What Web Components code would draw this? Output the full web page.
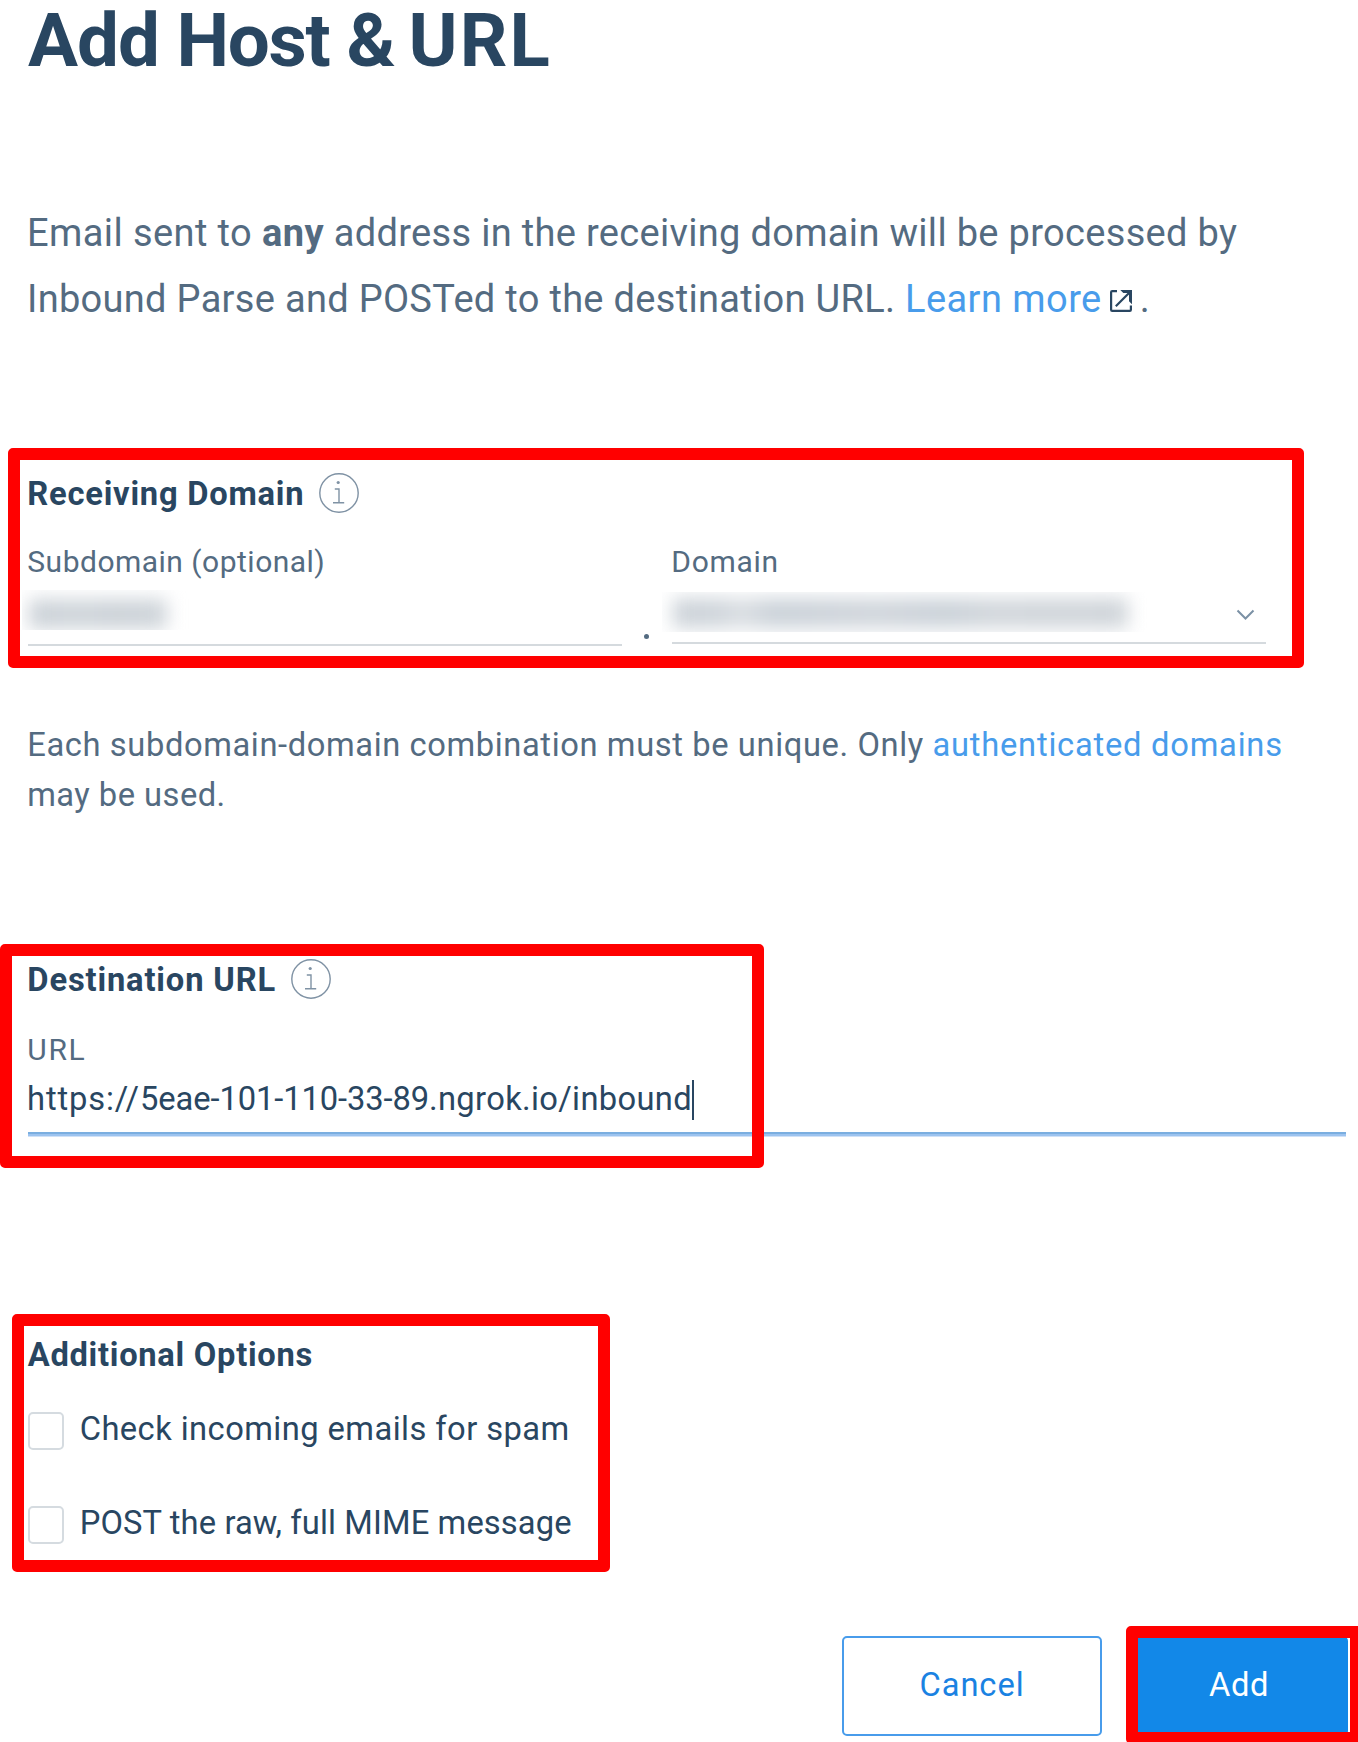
<!DOCTYPE html>
<html lang="en">
<head>
<meta charset="utf-8">
<title>Add Host &amp; URL</title>
<style>
html,body{margin:0;padding:0;background:#fff;overflow:hidden}
body{width:1358px;height:1742px;font-family:Roboto,"Liberation Sans",sans-serif;color:#294661}
</style>
</head>
<body>
<inbound-page></inbound-page>
<script>
const define = (name, html, init) => customElements.define(name, class extends HTMLElement {
  connectedCallback() {
    if (this.shadowRoot) return;
    const t = document.createElement('template');
    t.innerHTML = html;
    this.attachShadow({mode: 'open'}).append(t.content.cloneNode(true));
    if (init) init.call(this);
  }
});

/* A run of text whose tracking is adjusted so that it fills the width in "w". */
define('text-run', `<style>
:host{display:inline-block;white-space:pre;flex:none}
:host([link]){color:#489ceb}
:host([strong]){font-weight:700}
</style><slot></slot>`, function () {
  const w = parseFloat(this.getAttribute('w'));
  const n = this.textContent.length;
  if (w && n) {
    this.style.letterSpacing = (w - this.getBoundingClientRect().width) / n + 'px';
    this.style.width = w + 'px';
  }
});

define('info-icon', `<style>:host{display:block;width:40px;height:40px;flex:none}svg{display:block}</style>
<svg width="40" height="40" viewBox="0 0 40 40" fill="none" stroke="#7f92a4" stroke-width="1.4">
<circle cx="20" cy="20" r="19.2"/><path d="M15.8 16H20V29.7M14 29.7H25.2"/><circle cx="19.2" cy="9.5" r="1.6" fill="#7f92a4" stroke="none"/></svg>`);

define('external-icon', `<style>:host{display:block;width:22px;height:22px;flex:none}svg{display:block}</style>
<svg width="22" height="22" viewBox="0 0 22 22" fill="none" stroke="#294661" stroke-width="2.2">
<path d="M7 1.1H2.2Q1.1 1.1 1.1 2.2V19.8Q1.1 20.9 2.2 20.9H19.8Q20.9 20.9 20.9 19.8V15.5M5.8 16.2 20 2"/>
<path d="M10.3 0H22V14.2L19 11.2V4.4L17.6 3H13.3Z" fill="#294661" stroke="none"/></svg>`);

define('section-heading', `<style>
:host{display:flex;height:40px;margin-left:-.7px;font-size:32.7px;line-height:40px;font-weight:700;color:#294661}
.t{padding-top:1px;height:39px}
</style><div class="t"><slot></slot></div><slot name="icon"></slot>`);

define('form-field', `<style>
:host{display:flex;flex-direction:column;color:#546b81}
.l{height:40px;font-size:30px;line-height:40px;margin-left:-.7px}
</style><div class="l"><slot name="label"></slot></div><slot></slot>`);

/* Input whose value is obscured. */
define('masked-value', `<style>
:host{display:flex;justify-content:space-between;box-sizing:border-box;border-bottom:2px solid #d5dade}
.m{height:40px;width:var(--mw);margin-left:var(--ml);overflow:hidden;box-sizing:border-box;padding:var(--mp)}
.b{height:30px;filter:blur(9px);background:var(--ink)}
svg{display:block;margin:17px 11px 0 0}
:host(:not([select])) svg{display:none}
</style><div class="m"><div class="b"></div></div>
<svg width="19" height="12" viewBox="0 0 19 12" fill="none" stroke="#7b91a5" stroke-width="2"><path d="M1.5 1.5 9.5 9.5 17.5 1.5"/></svg>`);

define('url-input', `<style>
:host{display:flex;height:52px;font-size:32.7px;line-height:38px;color:#294661;margin-top:10px;
background:linear-gradient(#7aaee0 0 2px,#9cc3ef 2px 4px,#cfe1f7 4px 5px) 0 52px/100% 5px no-repeat;padding-bottom:5px}
.v{display:flex;margin-left:-1px}.c{width:2px;height:40px;background:#294661}
</style><div class="v"><slot></slot></div><div class="c"></div>`);

define('check-option', `<style>
:host{display:flex;height:38px;color:#294661;font-size:32.7px;line-height:36px}
.b{box-sizing:border-box;width:36px;height:38px;border:2px solid #d5dbe0;border-radius:5px;margin-right:15.7px}
.t{margin-top:-1px}
</style><div class="b"></div><div class="t"><slot></slot></div>`);

define('push-button', `<style>
:host{display:flex;justify-content:center;box-sizing:border-box;height:100px;width:260px;border:2px solid #489ceb;border-radius:5px;color:#1a82e2;font-size:32.7px;line-height:94px}
:host([primary]){width:218px;background:#1288e8;border-color:#1288e8;color:#fff}
</style><slot></slot>`);

/* Red outline laid over the form. */
define('call-out', `<style>:host{position:absolute;box-sizing:border-box;border:12px solid #f00;border-radius:5px}</style>`);

define('inbound-page', `<style>
:host{display:block;position:relative;width:1358px;height:1742px}
main{display:flex;flex-direction:column;padding-left:28px}
h1{display:flex;margin:0;height:80px;font-size:74.5px;line-height:81px;font-weight:700}
.intro{margin:120px 0 0 -1px;font-size:38px;line-height:66px;color:#546b81}
.line{display:flex}
.intro external-icon{margin:24px 8px 0 8px}
.r1{margin-top:141px}
.fields{display:flex;margin-top:29px;height:104px}
.fields form-field{width:594px}
.dot{width:50px;flex:none;padding:92px 0 0 21.5px;box-sizing:border-box}
.dot i{display:block;width:5px;height:5px;border-radius:3px;background:#546b81}
.help{margin:74px 0 0 -.8px;font-size:32.7px;line-height:50px;color:#546b81}
.r2{margin-top:139px}
.url{margin-top:31px;width:1318px}
.r3{margin:197px 0 0 -.3px}
.options{display:flex;flex-direction:column;gap:56px;margin-top:38px}
.actions{display:flex;gap:28px;margin:92px 0 0 814px}
</style>
<main>
<h1><text-run w="148.5">Add </text-run><text-run w="170">Host </text-run><text-run w="62">&amp; </text-run><text-run w="143.5">URL</text-run></h1>
<div class="intro">
<div class="line"><text-run w="235">Email sent to </text-run><text-run strong w="62">any</text-run><text-run w="913.3"> address in the receiving domain will be processed by</text-run></div>
<div class="line"><text-run w="878">Inbound Parse and POSTed to the destination URL. </text-run><text-run link w="196.7">Learn more</text-run><external-icon></external-icon><text-run>.</text-run></div>
</div>
<section-heading class="r1"><text-run w="277">Receiving Domain</text-run><info-icon slot="icon" style="margin-left:14.7px"></info-icon></section-heading>
<div class="fields">
<form-field><text-run slot="label" w="298">Subdomain (optional)</text-run>
<masked-value style="margin-top:8px;height:56px;--mw:170px;--ml:-6px;--mp:9px 0 0 7px;--ink:linear-gradient(90deg,#ccd2d8,#d0d6db 40%,#ccd2d8 60%,#cfd5da) 0 0/138px 100% no-repeat"></masked-value></form-field>
<div class="dot"><i></i></div>
<form-field><text-run slot="label" w="107.5">Domain</text-run>
<masked-value select style="margin-top:10px;height:52px;--mw:485px;--ml:-10px;--mp:6px 0 0 11px;--ink:linear-gradient(90deg,#cdd3d9,#cfd5db 10%,#dbdfe3 15%,#cbd2d9 22%,#d1d6dc 45%,#cbd2d9 60%,#d2d7dc 70%,#d0d5da) 0 0/455px 100% no-repeat"></masked-value></form-field>
</div>
<div class="help">
<div class="line"><text-run w="905.3">Each subdomain-domain combination must be unique. Only </text-run><text-run link w="350.3">authenticated domains</text-run></div>
<div class="line"><text-run w="198.5">may be used.</text-run></div>
</div>
<section-heading class="r2"><text-run w="248.7">Destination URL</text-run><info-icon slot="icon" style="margin-left:15px"></info-icon></section-heading>
<form-field class="url"><text-run slot="label" w="59">URL</text-run><url-input><text-run w="113">https://</text-run><text-run w="289">5eae-101-110-33-89</text-run><text-run w="263">.ngrok.io/inbound</text-run></url-input></form-field>
<section-heading class="r3"><text-run w="285.3">Additional Options</text-run></section-heading>
<div class="options">
<check-option><text-run w="490">Check incoming emails for spam</text-run></check-option>
<check-option><text-run w="492">POST the raw, full MIME message</text-run></check-option>
</div>
<div class="actions"><push-button><text-run w="105">Cancel</text-run></push-button><push-button primary><text-run w="60">Add</text-run></push-button></div>
</main>
<call-out style="left:8px;top:448px;width:1296px;height:220px"></call-out>
<call-out style="left:0;top:944px;width:764px;height:224px"></call-out>
<call-out style="left:12px;top:1314px;width:598px;height:258px"></call-out>
<call-out style="left:1126px;top:1626px;width:236px;height:118px"></call-out>`);
</script>
</body>
</html>
